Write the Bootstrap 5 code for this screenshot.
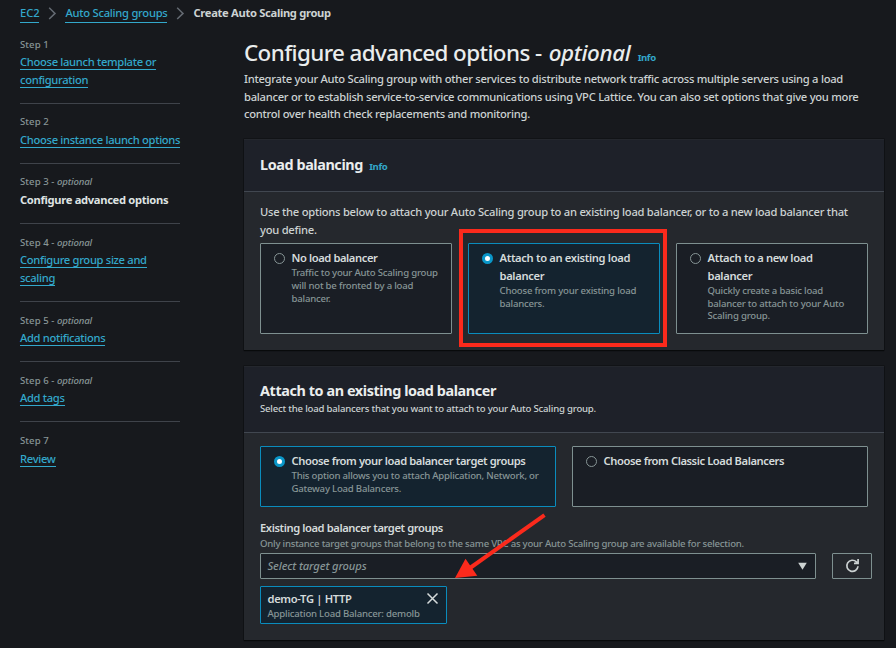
<!DOCTYPE html>
<html lang="en">
<head>
<meta charset="utf-8">
<meta name="viewport" content="width=device-width, initial-scale=1">
<title>Create Auto Scaling group</title>
<link rel="stylesheet" href="https://cdn.jsdelivr.net/npm/bootstrap@5.3.0/dist/css/bootstrap.min.css">
<style>
body{background:#17191d;color:#ccd2d2;font-family:"Noto Sans","Open Sans",sans-serif;font-size:11.2px;line-height:17.6px;font-weight:500;letter-spacing:-.26px;overflow:hidden;height:648px;white-space:nowrap}
.link-aws{color:#33a8cb;text-decoration:none;border-bottom:1px solid #33a8cb}
.crumbs{height:26px;padding:4px 0 0 20px}
.crumbs svg{margin:0 8.5px}
.crumb-short{letter-spacing:-.1px}
.crumb-now{font-weight:700;letter-spacing:-.32px}
.steps{width:160px;margin:0 64px 0 20px;flex:none}
.step{padding:9.6px 0 14px;height:60.2px;border-bottom:1px solid #3f434a;letter-spacing:-.32px}
.step:first-child{height:77.7px}
.step.tall{height:78px}
.step:last-child{border:0}
.step-no{font-size:9.6px;color:#879596;letter-spacing:.06px}
.step-no i{letter-spacing:-.15px}
.step-now{font-weight:700;color:#dfe3e3}
.content{width:640px}
h1{font-size:22.4px;line-height:28.8px;font-weight:500;color:#eaeded;letter-spacing:-.6px;margin:12.6px 0 -2px}
h1 i{letter-spacing:-.36px;padding-left:2px}
.info{font-size:9.6px;font-weight:700;letter-spacing:-.4px;color:#33a8cb;padding-left:3px}
h1 .info{padding-left:2px}
.intro{line-height:17.4px;height:53px;letter-spacing:-.27px;margin:0}
.panel{background:#25282d;box-shadow:0 0 0 .5px #0c0e11,0 1px 1px #050607;border-top:1px solid #24272d;margin-top:16px}
.panel-lb{height:211px}
.panel-tg{height:274px}
.panel-head{background:#1e2129;border-bottom:1px solid #414750;padding:0 16px;height:52px}
.panel-head.two-line{height:66px;padding-top:15px}
.head-note{font-size:9.6px;letter-spacing:-.205px}
h2{font-size:14.4px;line-height:17.6px;font-weight:700;letter-spacing:-.41px;color:#eaeded;margin:0}
.lb-intro{letter-spacing:-.25px;height:40px}
.lb-body{padding-top:11px}
.tg-body{padding-top:13px}
.lb-tiles{height:91px}
.tg-tiles{height:61px}
.tile{position:relative;flex:1 1 0;border:1px solid #7e9090;border-radius:1px;background:#1a1e25;padding:4.6px 12px 0 13px;display:flex;gap:6.5px}
.tile.on{border-color:#0a8cbd;background:#14232f}
.ring{width:11px;height:11px;border:1px solid #879596;border-radius:50%;flex:none;margin-top:4px}
.on .ring{border:3.5px solid #0a97c9;background:#fff}
.tile-name{font-weight:600;color:#d5dbdb;letter-spacing:-.34px}
.tight{letter-spacing:-.415px}
.note{font-size:9.6px;line-height:12.8px;color:#879596;letter-spacing:-.215px}
.tile .note{padding-top:.6px}
.field-name{margin-top:12px}
.field-note{letter-spacing:-.228px;height:16px;padding-top:.8px}
.marked::after{content:"";position:absolute;inset:-15px -8px -14px -10px;border:4px solid #fb2a1c}
.picker{height:26px;border:1px solid #7e9090;border-radius:1px;background:#1a1e25;width:556px;color:#879596;letter-spacing:-.13px;padding:0 8px 0 6.5px}
.reload{height:26px;width:40px;border:1px solid #7e9090;border-radius:1px;flex:none}
.token{width:187px;height:38px;border:1px solid #0a8cbd;border-radius:1px;background:#14232f;padding:3px 6.5px;margin-top:7px}
.token svg{margin:2px 1px 0 0}
.arrow{position:absolute;left:210px;top:146px}
</style>
</head>
<body>
<nav class="crumbs d-flex align-items-start" aria-label="breadcrumb">
  <a class="link-aws crumb-short" href="#">EC2</a>
  <svg width="9" height="18" viewBox="0 0 9 18" fill="none" stroke="#656b73" stroke-width="1.5"><path d="M1.2 3.8l5.8 5.6-5.8 5.6"/></svg>
  <a class="link-aws" href="#">Auto Scaling groups</a>
  <svg width="9" height="18" viewBox="0 0 9 18" fill="none" stroke="#656b73" stroke-width="1.5"><path d="M1.2 3.8l5.8 5.6-5.8 5.6"/></svg>
  <span class="crumb-now">Create Auto Scaling group</span>
</nav>
<div class="d-flex">
  <aside class="steps">
    <div class="step"><div class="step-no">Step 1</div><a class="link-aws" href="#">Choose launch template or<br>configuration</a></div>
    <div class="step"><div class="step-no">Step 2</div><a class="link-aws" href="#">Choose instance launch options</a></div>
    <div class="step"><div class="step-no">Step 3 - <i>optional</i></div><span class="step-now">Configure advanced options</span></div>
    <div class="step tall"><div class="step-no">Step 4 - <i>optional</i></div><a class="link-aws" href="#">Configure group size and<br>scaling</a></div>
    <div class="step"><div class="step-no">Step 5 - <i>optional</i></div><a class="link-aws" href="#">Add notifications</a></div>
    <div class="step"><div class="step-no">Step 6 - <i>optional</i></div><a class="link-aws" href="#">Add tags</a></div>
    <div class="step"><div class="step-no">Step 7</div><a class="link-aws" href="#">Review</a></div>
  </aside>
  <main class="content">
    <h1>Configure advanced options - <i>optional</i> <a class="info text-decoration-none" href="#">Info</a></h1>
    <p class="intro">Integrate your Auto Scaling group with other services to distribute network traffic across multiple servers using a load<br>balancer or to establish service-to-service communications using VPC Lattice. You can also set options that give you more<br>control over health check replacements and monitoring.</p>

    <section class="panel panel-lb">
      <div class="panel-head d-flex align-items-center"><h2>Load balancing <a class="info text-decoration-none" href="#">Info</a></h2></div>
      <div class="lb-body px-3">
        <div class="lb-intro">Use the options below to attach your Auto Scaling group to an existing load balancer, or to a new load balancer that<br>you define.</div>
        <div class="lb-tiles d-flex gap-3">
          <div class="tile"><span class="ring"></span><div><div class="tile-name tight">No load balancer</div><div class="note">Traffic to your Auto Scaling group<br>will not be fronted by a load<br>balancer.</div></div></div>
          <div class="tile on marked"><span class="ring"></span><div><div class="tile-name">Attach to an existing load<br>balancer</div><div class="note">Choose from your existing load<br>balancers.</div></div></div>
          <div class="tile"><span class="ring"></span><div><div class="tile-name">Attach to a new load<br>balancer</div><div class="note">Quickly create a basic load<br>balancer to attach to your Auto<br>Scaling group.</div></div></div>
        </div>
      </div>
    </section>

    <section class="panel panel-tg position-relative">
      <div class="panel-head two-line"><h2>Attach to an existing load balancer</h2><div class="head-note">Select the load balancers that you want to attach to your Auto Scaling group.</div></div>
      <div class="tg-body px-3">
        <div class="tg-tiles d-flex gap-3">
          <div class="tile on"><span class="ring"></span><div><div class="tile-name tight">Choose from your load balancer target groups</div><div class="note">This option allows you to attach Application, Network, or<br>Gateway Load Balancers.</div></div></div>
          <div class="tile"><span class="ring"></span><div class="tile-name tight">Choose from Classic Load Balancers</div></div>
        </div>
        <div class="tile-name tight field-name">Existing load balancer target groups</div>
        <div class="note field-note">Only instance target groups that belong to the same VPC as your Auto Scaling group are available for selection.</div>
        <div class="d-flex gap-3">
          <div class="picker flex-shrink-0 d-flex align-items-center justify-content-between"><i>Select target groups</i><svg width="9" height="8" viewBox="0 0 9 8" fill="#ccd2d2"><path d="M.2.8h8.6L4.5 7.8z"/></svg></div>
          <div class="reload d-flex align-items-center justify-content-center">
            <svg width="15" height="15" viewBox="0 0 15 15" fill="none" stroke="#ccd2d2" stroke-width="1.7"><path d="M13 8.3A5.6 5.6 0 1 1 11.4 3.9L12.6 4.9M13.1 1v4.3H9"/></svg>
          </div>
        </div>
        <div class="token">
          <div class="d-flex justify-content-between"><span class="tile-name">demo-TG | HTTP</span><svg width="13" height="13" viewBox="0 0 13 13" stroke="#d5dbdb" stroke-width="1.5"><path d="M1.5 1.5l10 10M11.5 1.5l-10 10"/></svg></div>
          <div class="note">Application Load Balancer: demolb</div>
        </div>
      </div>
      <svg class="arrow" width="94" height="68" viewBox="0 0 94 68"><path d="M90.5 2.2L16 55" stroke="#fb2a1c" stroke-width="4"/><path d="M1 65L11.5 45.8l11.8 17z" fill="#fb2a1c"/></svg>
    </section>
  </main>
</div>
<script src="https://cdn.jsdelivr.net/npm/bootstrap@5.3.0/dist/js/bootstrap.bundle.min.js"></script>
</body>
</html>
